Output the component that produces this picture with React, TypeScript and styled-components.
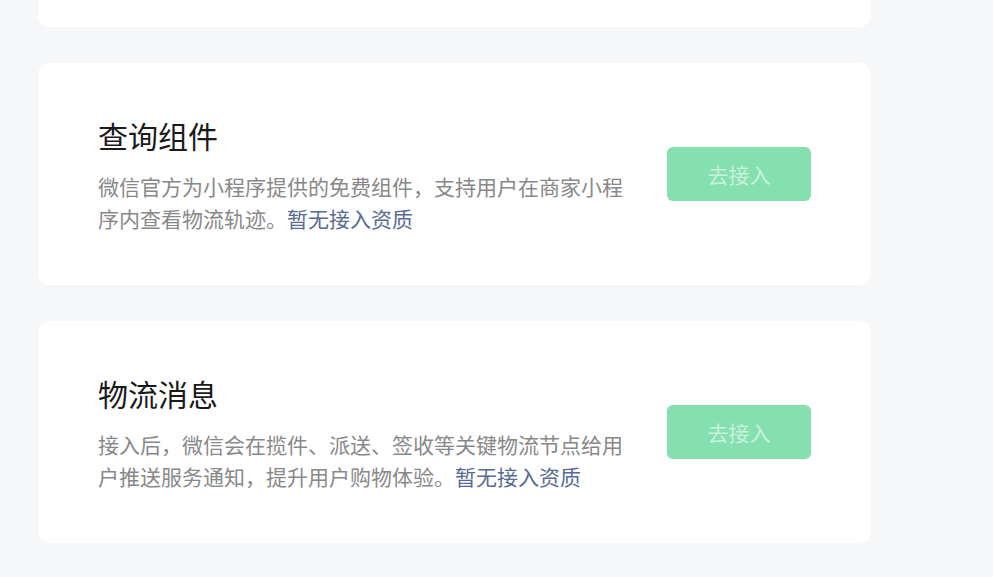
import React from 'react';
import styled, { createGlobalStyle } from 'styled-components';

const GlobalStyle = createGlobalStyle`
    html, body {
        margin: 0;
        padding: 0;
        background: #f6f7f9;
        overflow: hidden;
    }

    body {
        font-family: "Noto Sans CJK SC", "Noto Sans", "Liberation Sans", sans-serif;
    }
`;

const Page = styled.div`
    width: 993px;
    height: 577px;
    overflow: hidden;
    background: #f6f7f9;
`;

const List = styled.div`
    display: flex;
    flex-direction: column;
    gap: 36px;
    width: 833px;
    margin: -195px 0 0 38px;
`;

const Card = styled.div`
    display: flex;
    flex-direction: row;
    justify-content: space-between;
    align-items: center;
    box-sizing: border-box;
    height: 222px;
    padding: 0 60px;
    background: #ffffff;
    border-radius: 12px;
`;

const Details = styled.div`
    width: 530px;
`;

const Title = styled.div`
    font-size: 30px;
    line-height: 42px;
    color: #1a1a1a;
    margin-bottom: 14px;
`;

const Desc = styled.div`
    font-size: 21px;
    line-height: 32px;
    color: #888888;
`;

const Link = styled.a`
    color: #576b95;
    text-decoration: none;
    cursor: pointer;
`;

const ActionButton = styled.button`
    width: 144px;
    height: 54px;
    border: none;
    border-radius: 6px;
    background: #85e0b0;
    color: #c9f1db;
    font-family: inherit;
    font-size: 21px;
    cursor: not-allowed;
`;

interface IService {
    title: string;
    desc: string;
}

const services: IService[] = [
    {
        title: '查询组件',
        desc: '微信官方为小程序提供的免费组件，支持用户在商家小程序内查看物流轨迹。',
    },
    {
        title: '物流消息',
        desc: '接入后，微信会在揽件、派送、签收等关键物流节点给用户推送服务通知，提升用户购物体验。',
    },
];

const App: React.FC = () => {
    return (
        <Page>
            <GlobalStyle />
            <List>
                {/* previous card, scrolled mostly out of view */}
                <Card />
                {services.map((service) => (
                    <Card key={service.title}>
                        <Details>
                            <Title>{service.title}</Title>
                            <Desc>
                                {service.desc}
                                <Link>暂无接入资质</Link>
                            </Desc>
                        </Details>
                        <ActionButton disabled>去接入</ActionButton>
                    </Card>
                ))}
            </List>
        </Page>
    );
};

export default App;
